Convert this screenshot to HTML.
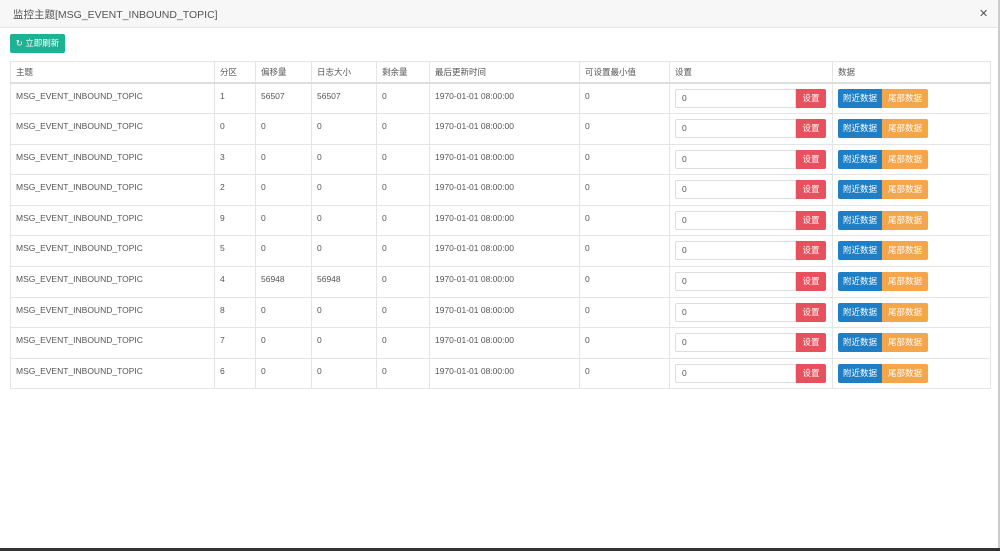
<!DOCTYPE html><html><head><meta charset="utf-8"><style>
body{margin:0;width:1000px;height:551px;overflow:hidden;background:#fff;font-family:"Liberation Sans","Noto Sans CJK SC",sans-serif;color:#555;position:relative}
.hd{position:absolute;left:0;top:0;width:998px;height:27px;background:#f7f7f7;border-bottom:1px solid #e8e8e8}
.hd span{position:absolute;left:13px;top:7px;font-size:10.5px;color:#555}
.x{position:absolute;left:979px;top:7px;font-size:11px;color:#555}
.rf{position:absolute;left:10px;top:34px;width:55px;height:19px;background:#1cb394;border-radius:2px;color:#fff;font-size:8.5px;line-height:19px;text-align:center}
table{position:absolute;left:10px;top:61px;border-collapse:collapse;font-size:8.5px;table-layout:fixed;width:980px}
td,th{border:1px solid #e5e5e5;padding:0 0 0 5px;vertical-align:top;text-align:left;font-weight:normal;color:#555}
th{height:20px;line-height:20px;border-bottom:2px solid #ddd}
td{height:30.6px;padding-top:7px;box-sizing:border-box}
.in{display:inline-block;width:121px;height:19px;border:1px solid #ddd;border-radius:2px 0 0 2px;vertical-align:top;margin-top:-2px;box-sizing:border-box;line-height:17px;padding-left:6px;font-size:8.5px}
.b{display:inline-block;height:19px;line-height:19px;color:#fff;vertical-align:top;margin-top:-2px;text-align:center}
.r{background:#e9505d;width:30px;border-radius:0 2px 2px 0}
.bl{background:#1e7fc6;width:44px;border-radius:2px 0 0 2px}
.o{background:#f5a54a;width:46px;border-radius:0 2px 2px 0}
.bot{position:absolute;left:0;top:548px;width:1000px;height:3px;background:#333}
.rt{position:absolute;left:998px;top:0;width:2px;height:548px;background:#ccc}
</style></head><body>
<div class="hd"><span>监控主题[MSG_EVENT_INBOUND_TOPIC]</span><div class="x">✕</div></div>
<div class="rf">↻ 立即刷新</div>
<table>
<colgroup><col style="width:204px"><col style="width:41px"><col style="width:56px"><col style="width:65px"><col style="width:53px"><col style="width:150px"><col style="width:90px"><col style="width:163px"><col style="width:158px"></colgroup>
<tr><th>主题</th><th>分区</th><th>偏移量</th><th>日志大小</th><th>剩余量</th><th>最后更新时间</th><th>可设置最小值</th><th>设置</th><th>数据</th></tr>
<tr><td>MSG_EVENT_INBOUND_TOPIC</td><td>1</td><td>56507</td><td>56507</td><td>0</td><td>1970-01-01 08:00:00</td><td>0</td><td><span class="in">0</span><span class="b r">设置</span></td><td><span class="b bl">附近数据</span><span class="b o">尾部数据</span></td></tr>
<tr><td>MSG_EVENT_INBOUND_TOPIC</td><td>0</td><td>0</td><td>0</td><td>0</td><td>1970-01-01 08:00:00</td><td>0</td><td><span class="in">0</span><span class="b r">设置</span></td><td><span class="b bl">附近数据</span><span class="b o">尾部数据</span></td></tr>
<tr><td>MSG_EVENT_INBOUND_TOPIC</td><td>3</td><td>0</td><td>0</td><td>0</td><td>1970-01-01 08:00:00</td><td>0</td><td><span class="in">0</span><span class="b r">设置</span></td><td><span class="b bl">附近数据</span><span class="b o">尾部数据</span></td></tr>
<tr><td>MSG_EVENT_INBOUND_TOPIC</td><td>2</td><td>0</td><td>0</td><td>0</td><td>1970-01-01 08:00:00</td><td>0</td><td><span class="in">0</span><span class="b r">设置</span></td><td><span class="b bl">附近数据</span><span class="b o">尾部数据</span></td></tr>
<tr><td>MSG_EVENT_INBOUND_TOPIC</td><td>9</td><td>0</td><td>0</td><td>0</td><td>1970-01-01 08:00:00</td><td>0</td><td><span class="in">0</span><span class="b r">设置</span></td><td><span class="b bl">附近数据</span><span class="b o">尾部数据</span></td></tr>
<tr><td>MSG_EVENT_INBOUND_TOPIC</td><td>5</td><td>0</td><td>0</td><td>0</td><td>1970-01-01 08:00:00</td><td>0</td><td><span class="in">0</span><span class="b r">设置</span></td><td><span class="b bl">附近数据</span><span class="b o">尾部数据</span></td></tr>
<tr><td>MSG_EVENT_INBOUND_TOPIC</td><td>4</td><td>56948</td><td>56948</td><td>0</td><td>1970-01-01 08:00:00</td><td>0</td><td><span class="in">0</span><span class="b r">设置</span></td><td><span class="b bl">附近数据</span><span class="b o">尾部数据</span></td></tr>
<tr><td>MSG_EVENT_INBOUND_TOPIC</td><td>8</td><td>0</td><td>0</td><td>0</td><td>1970-01-01 08:00:00</td><td>0</td><td><span class="in">0</span><span class="b r">设置</span></td><td><span class="b bl">附近数据</span><span class="b o">尾部数据</span></td></tr>
<tr><td>MSG_EVENT_INBOUND_TOPIC</td><td>7</td><td>0</td><td>0</td><td>0</td><td>1970-01-01 08:00:00</td><td>0</td><td><span class="in">0</span><span class="b r">设置</span></td><td><span class="b bl">附近数据</span><span class="b o">尾部数据</span></td></tr>
<tr><td>MSG_EVENT_INBOUND_TOPIC</td><td>6</td><td>0</td><td>0</td><td>0</td><td>1970-01-01 08:00:00</td><td>0</td><td><span class="in">0</span><span class="b r">设置</span></td><td><span class="b bl">附近数据</span><span class="b o">尾部数据</span></td></tr>
</table>
<div class="rt"></div><div class="bot"></div>
</body></html>
